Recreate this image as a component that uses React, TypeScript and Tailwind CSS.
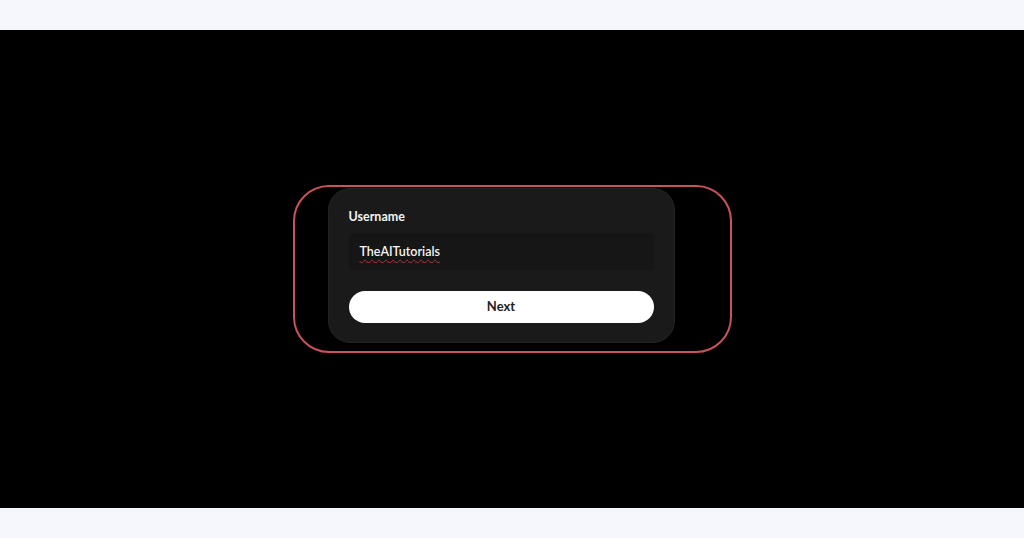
export default function App() {
  return (
    <div className="flex h-[538px] w-[1024px] flex-col bg-[#f6f7fd] font-['Lato',sans-serif]">
      <div className="h-[30px] shrink-0" />
      <div className="flex h-[478px] shrink-0 items-center justify-center bg-black">
        <div className="flex h-[168px] w-[439px] items-start rounded-[36px] border-2 border-[#c9535b] pl-[33px] pt-px">
          <div className="flex w-[347px] flex-col rounded-[22px] border border-[#232323] bg-[#1a1a1a] px-[20px] pb-[19px] pt-[20px]">
            <label className="text-[12.5px] font-bold leading-[16px] text-[#f2f2f2]">Username</label>
            <div className="mt-[8px] flex h-[37px] items-center rounded-[4px] bg-[#161616] px-[11px]">
              <span className="text-[12.5px] font-semibold leading-[16px] text-[#f4f4f4] underline decoration-[#c0303a] decoration-wavy decoration-1 underline-offset-[3px]">
                TheAITutorials
              </span>
            </div>
            <button className="mt-[21px] h-[32px] w-full rounded-full bg-white text-[13px] font-bold text-[#222]">
              Next
            </button>
          </div>
        </div>
      </div>
      <div className="flex-1" />
    </div>
  )
}
